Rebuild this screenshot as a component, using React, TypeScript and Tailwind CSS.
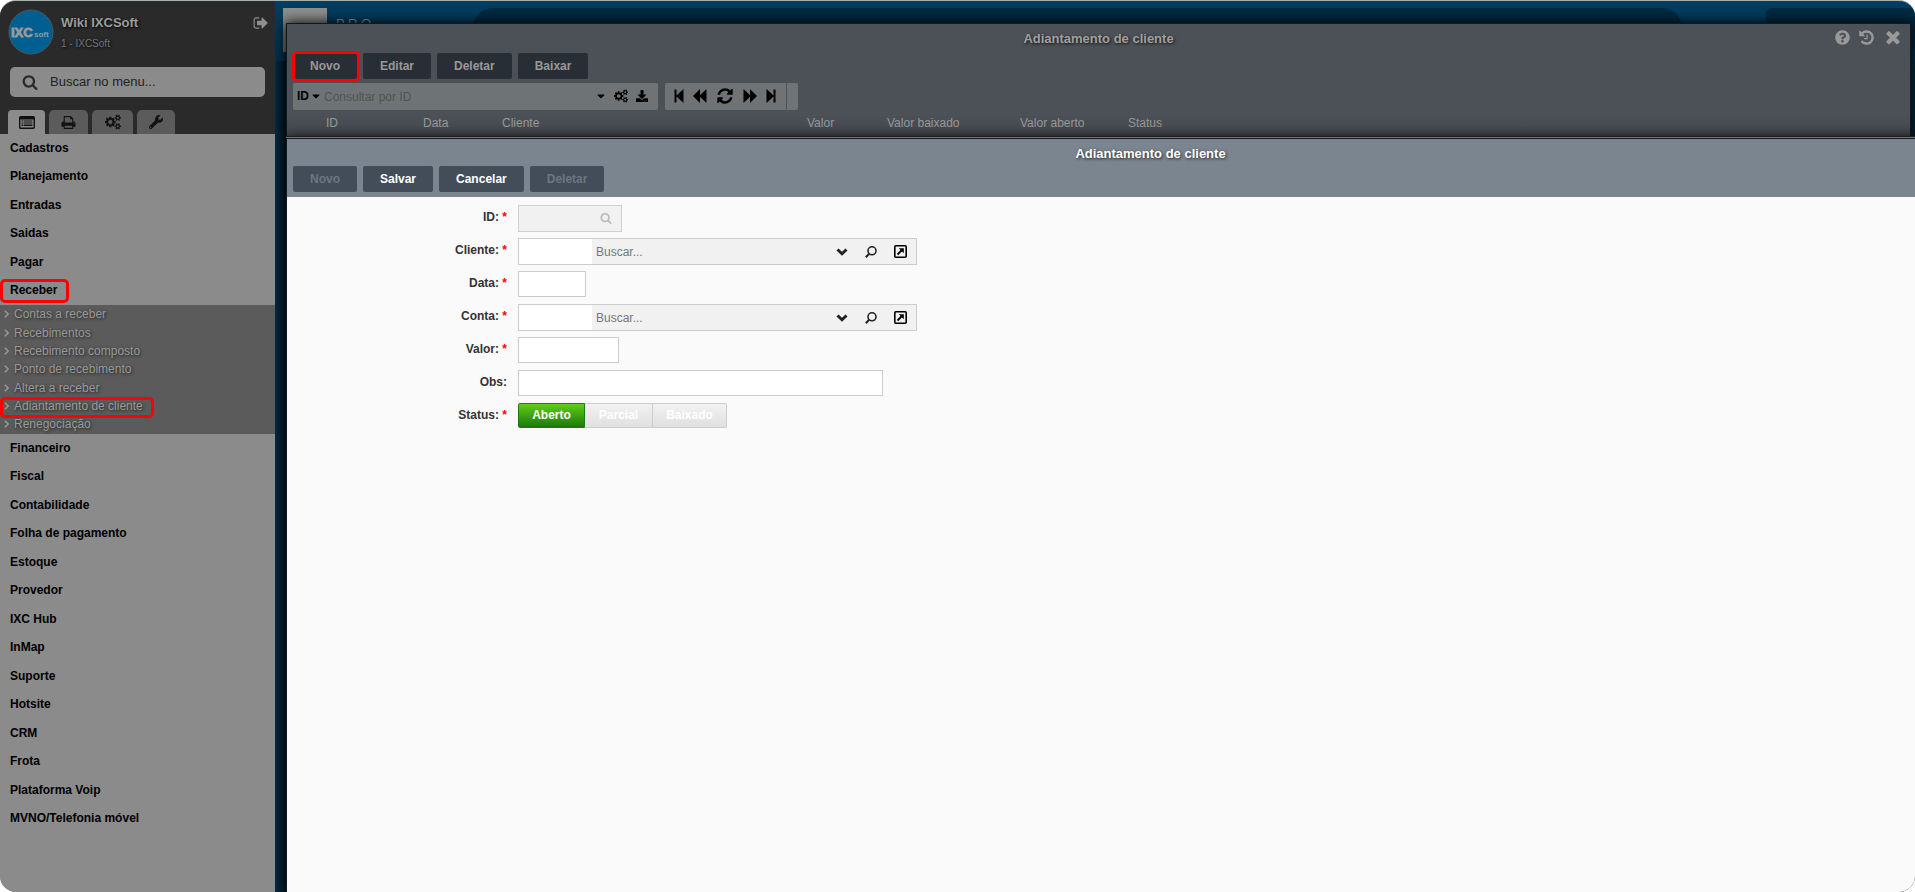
import { Fragment, type ReactNode } from 'react';
import { FaCaretDown, FaDownload, FaQuestionCircle, FaWrench } from 'react-icons/fa';
import { clsx } from 'clsx';

const paths = {
  signOut:
    'M704 1440q0 4 1 20t.5 26.5-3 23.5-10 19.5-20.5 6.5h-320q-119 0-203.5-84.5t-84.5-203.5v-704q0-119 84.5-203.5t203.5-84.5h320q13 0 22.5 9.5t9.5 22.5q0 4 1 20t.5 26.5-3 23.5-10 19.5-20.5 6.5h-320q-66 0-113 47t-47 113v704q0 66 47 113t113 47h312l11.5 1 11.5 3 8 5.5 7 9 2 13.5zm928-544q0 26-19 45l-544 544q-19 19-45 19t-45-19-19-45v-288h-448q-26 0-45-19t-19-45v-384q0-26 19-45t45-19h448v-288q0-26 19-45t45-19 45 19l544 544q19 19 19 45z',
  search:
    'M1216 832q0-185-131.5-316.5t-316.5-131.5-316.5 131.5-131.5 316.5 131.5 316.5 316.5 131.5 316.5-131.5 131.5-316.5zm512 832q0 52-38 90t-90 38q-54 0-90-38l-343-342q-179 124-399 124-143 0-273.5-55.5t-225-150-150-225-55.5-273.5 55.5-273.5 150-225 225-150 273.5-55.5 273.5 55.5 225 150 150 225 55.5 273.5q0 220-124 399l343 343q37 37 37 90z',
  print:
    'M448 1536h896v-256h-896v256zm0-640h896v-384h-160q-40 0-68-28t-28-68v-160h-640v640zm1152 64q0-26-19-45t-45-19-45 19-19 45 19 45 45 19 45-19 19-45zm128 0v416q0 13-9.5 22.5t-22.5 9.5h-224v160q0 40-28 68t-68 28h-960q-40 0-68-28t-28-68v-160h-224q-13 0-22.5-9.5t-9.5-22.5v-416q0-79 56.5-135.5t135.5-56.5h64v-544q0-40 28-68t68-28h672q40 0 88 20t76 48l152 152q28 28 48 76t20 88v256h64q79 0 135.5 56.5t56.5 135.5z',
  cogs:
    'M896 896q0-106-75-181t-181-75-181 75-75 181 75 181 181 75 181-75 75-181zm768 512q0-52-38-90t-90-38-90 38-38 90q0 53 37.5 90.5t90.5 37.5 90.5-37.5 37.5-90.5zm0-1024q0-52-38-90t-90-38-90 38-38 90q0 53 37.5 90.5t90.5 37.5 90.5-37.5 37.5-90.5zm-384 421v185q0 10-7 19.5t-16 10.5l-155 24q-11 35-32 76 34 48 90 115 7 11 7 20 0 12-7 19-23 30-82.5 89.5t-78.5 59.5q-11 0-21-7l-115-90q-37 19-77 31-11 108-23 155-7 24-30 24h-186q-11 0-20-7.5t-10-17.5l-23-153q-34-10-75-31l-118 89q-7 7-20 7-11 0-21-8-144-133-144-160 0-9 7-19 10-14 41-53t47-61q-23-44-35-82l-152-24q-10-1-17-9.5t-7-19.5v-185q0-10 7-19.5t16-10.5l155-24q11-35 32-76-34-48-90-115-7-11-7-20 0-12 7-20 22-30 82-89t79-59q11 0 21 7l115 90q34-18 77-32 11-108 23-154 7-24 30-24h186q11 0 20 7.5t10 17.5l23 153q34 10 75 31l118-89q8-7 20-7 11 0 21 8 144 133 144 160 0 8-7 19-12 16-42 54t-45 60q23 48 34 82l152 23q10 2 17 10.5t7 19.5zm640 533v140q0 16-149 31-12 27-30 52 51 113 51 138 0 4-4 7-122 71-124 71-8 0-46-47t-52-68q-20 2-30 2t-30-2q-14 21-52 68t-46 47q-2 0-124-71-4-3-4-7 0-25 51-138-18-25-30-52-149-15-149-31v-140q0-16 149-31 13-29 30-52-51-113-51-138 0-4 4-7 4-2 35-20t59-34 30-16q8 0 46 46.5t52 67.5q20-2 30-2t30 2q51-71 92-112l6-2q4 0 124 70 4 3 4 7 0 25-51 138 17 23 30 52 149 15 149 31zm0-1024v140q0 16-149 31-12 27-30 52 51 113 51 138 0 4-4 7-122 71-124 71-8 0-46-47t-52-68q-20 2-30 2t-30-2q-14 21-52 68t-46 47q-2 0-124-71-4-3-4-7 0-25 51-138-18-25-30-52-149-15-149-31v-140q0-16 149-31 13-29 30-52-51-113-51-138 0-4 4-7 4-2 35-20t59-34 30-16q8 0 46 46.5t52 67.5q20-2 30-2t30 2q51-71 92-112l6-2q4 0 124 70 4 3 4 7 0 25-51 138 17 23 30 52 149 15 149 31z',
  refresh:
    'M1639 1056q0 5-1 7-64 268-268 434.5t-478 166.5q-146 0-282.5-55t-243.5-157l-129 129q-19 19-45 19t-45-19-19-45v-448q0-26 19-45t45-19h448q26 0 45 19t19 45-19 45l-137 137q71 66 161 102t187 36q134 0 250-65t186-179q11-17 53-117 8-23 30-23h192q13 0 22.5 9.5t9.5 22.5zm25-800v448q0 26-19 45t-45 19h-448q-26 0-45-19t-19-45 19-45l138-138q-148-137-349-137-134 0-250 65t-186 179q-11 17-53 117-8 23-30 23h-199q-13 0-22.5-9.5t-9.5-22.5v-7q65-268 270-434.5t480-166.5q146 0 284 55.5t245 156.5l130-129q19-19 45-19t45 19 19 45z',
  history:
    'M1664 896q0 156-61 298t-164 245-245 164-298 61q-172 0-327-72.5t-264-204.5q-7-10-6.5-22.5t8.5-20.5l137-138q10-9 25-9 16 2 23 12 73 95 179 147t225 52q104 0 198.5-40.5t163.5-109.5 109.5-163.5 40.5-198.5-40.5-198.5-109.5-163.5-163.5-109.5-198.5-40.5q-98 0-188 35.5t-160 101.5l137 138q31 30 14 69-17 40-59 40h-448q-26 0-45-19t-19-45v-448q0-42 40-59 39-17 69 14l130 129q107-101 244.5-156.5t284.5-55.5q156 0 298 61t245 164 164 245 61 298zm-640-288v448q0 14-9 23t-23 9h-320q-14 0-23-9t-9-23v-64q0-14 9-23t23-9h224v-352q0-14 9-23t23-9h64q14 0 23 9t9 23z',
  times:
    'M1490 1322q0 40-28 68l-136 136q-28 28-68 28t-68-28l-294-294-294 294q-28 28-68 28t-68-28l-136-136q-28-28-28-68t28-68l294-294-294-294q-28-28-28-68t28-68l136-136q28-28 68-28t68 28l294 294 294-294q28-28 68-28t68 28l136 136q28 28 28 68t-28 68l-294 294 294 294q28 28 28 68z',
};

function Icon({ name, className }: { name: keyof typeof paths; className?: string }) {
  return (
    <svg viewBox={name === 'cogs' ? '0 0 1920 1792' : '0 0 1792 1792'} fill="currentColor" className={className}>
      <path d={paths[name]} />
    </svg>
  );
}

const menuTop = ['Cadastros', 'Planejamento', 'Entradas', 'Saidas', 'Pagar', 'Receber'];

const submenu = [
  'Contas a receber',
  'Recebimentos',
  'Recebimento composto',
  'Ponto de recebimento',
  'Altera a receber',
  'Adiantamento de cliente',
  'Renegociação',
];

const menuBottom = [
  'Financeiro',
  'Fiscal',
  'Contabilidade',
  'Folha de pagamento',
  'Estoque',
  'Provedor',
  'IXC Hub',
  'InMap',
  'Suporte',
  'Hotsite',
  'CRM',
  'Frota',
  'Plataforma Voip',
  'MVNO/Telefonia móvel',
];

const columns = [
  { label: 'ID', className: 'w-[136px] pl-[39px]' },
  { label: 'Data', className: 'w-[79px]' },
  { label: 'Cliente', className: 'w-[305px]' },
  { label: 'Valor', className: 'w-[80px]' },
  { label: 'Valor baixado', className: 'w-[133px]' },
  { label: 'Valor aberto', className: 'w-[108px]' },
  { label: 'Status', className: '' },
];

function Highlight({ className }: { className: string }) {
  return <span className={clsx('pointer-events-none absolute border-[3px] border-[#ff0000]', className)} />;
}

function Sidebar() {
  return (
    <aside className="w-[275px] shrink-0 bg-[#8b8b8b]">
      <header className="flex h-[133px] flex-col bg-[#2a2a2a]">
        <div className="flex items-start pt-2 pr-[6px] pl-2">
          <svg viewBox="0 0 46 46" className="size-[46px]">
            <circle cx="23" cy="23" r="22" fill="#005f91" stroke="#4a5a63" />
            <text
              x="3"
              y="28"
              fontFamily="Liberation Sans, Arial, sans-serif"
              fontSize="13"
              fontWeight="bold"
              fill="#9a9a9a"
              stroke="#9a9a9a"
              strokeWidth="0.8"
            >
              IXC
            </text>
            <text x="26" y="28" fontFamily="Liberation Sans, Arial, sans-serif" fontSize="8" fontWeight="bold" fill="#9a9a9a">
              soft
            </text>
          </svg>
          <div className="flex-1 pt-[6px] pl-[7px] text-shadow-[1px_1px_3px_#000]">
            <h1 className="text-[13px] leading-4 font-bold text-[#9c9c9c]">Wiki IXCSoft</h1>
            <p className="pt-[7px] text-[10px] leading-3 text-[#757575]">1 - IXCSoft</p>
          </div>
          <button aria-label="Sair" className="pt-[6px] text-[#8f8f8f]">
            <Icon name="signOut" className="size-4" />
          </button>
        </div>
        <label className="mx-[10px] mt-3 flex h-[30px] items-center rounded-[5px] bg-[#8b8b8b] pl-3">
          <Icon name="search" className="size-4 shrink-0 text-[#2a2a2a]" />
          <input
            aria-label="Buscar no menu"
            placeholder="Buscar no menu..."
            className="ml-3 w-full bg-transparent text-[13px] text-[#222] outline-none placeholder:text-[#222]"
          />
        </label>
        <div className="mt-3 flex h-[25px] items-end gap-1 pl-2 text-[#111]">
          <button aria-label="Menu" className="flex h-6 w-[37px] items-center justify-center rounded-t-[4px] bg-[#8b8b8b]">
            <svg viewBox="0 0 16 13" className="h-[13px] w-4">
              <rect x="0.700" y="0.700" width="14.600" height="11.600" rx="1" fill="none" stroke="currentColor" strokeWidth="1.400" />
              <path
                d="M1 1h14v2.500H1zM2.500 4.500h2v1h-2zM5 4.500h8.500v1H5zM2.500 6.500h2v1h-2zM5 6.500h8.500v1H5zM2.500 8.500h2v1.500h-2zM5 8.500h8.500v1.500H5z"
                fill="currentColor"
              />
            </svg>
          </button>
          <button aria-label="Relatórios" className="flex h-6 w-[39px] items-center justify-center rounded-t-[5px] bg-[#5b5b5b]">
            <Icon name="print" className="size-[15px]" />
          </button>
          <button aria-label="Configurações" className="flex h-6 w-[41px] items-center justify-center rounded-t-[5px] bg-[#5b5b5b]">
            <Icon name="cogs" className="size-4" />
          </button>
          <button aria-label="Ferramentas" className="flex h-6 w-[38px] items-center justify-center rounded-t-[5px] bg-[#5b5b5b]">
            <FaWrench className="size-[14px]" />
          </button>
        </div>
      </header>
      <nav className="text-xs">
        <MenuList items={menuTop} />
        <ul className="bg-[#5b5b5b] text-[#999] text-shadow-[1px_1px_3px_#222]">
          {submenu.map((item) => (
            <li key={item} className="relative h-[18px] nth-[3n+1]:h-[19px]">
              <a href="#" className="flex items-center gap-[5px] pl-1 leading-[18px]">
                <svg viewBox="0 0 5 8" className="h-2 w-[5px]" fill="none" stroke="currentColor" strokeWidth="1.500">
                  <path d="M.8.800 4.200 4 .8 7.200" />
                </svg>
                {item}
              </a>
              {item === 'Adiantamento de cliente' && <Highlight className="top-0 left-0 h-[21px] w-[154px] rounded-[5px]" />}
            </li>
          ))}
        </ul>
        <MenuList items={menuBottom} />
      </nav>
    </aside>
  );
}

function MenuList({ items }: { items: string[] }) {
  return (
    <ul className="font-bold text-black">
      {items.map((item) => (
        <li key={item} className="relative h-7 even:h-[29px]">
          <a href="#" className="block pl-[10px] leading-7">
            {item}
          </a>
          {item === 'Receber' && <Highlight className="top-[3px] left-0 h-6 w-[69px] rounded-[5px]" />}
        </li>
      ))}
    </ul>
  );
}

function Desktop() {
  return (
    <div className="absolute inset-0 bg-linear-to-b from-[#003f63] to-[#00283e] to-[80px]">
      <div className="absolute top-[7px] left-2 size-11 bg-linear-to-b from-[#8f8f8f] to-[#6f6f6f]" />
      <div className="absolute top-[15px] left-[61px] text-[13px] leading-4 text-[#8396a1]">P R O —</div>
      <div className="absolute top-[7px] right-[233px] left-[198px] h-11 rounded-[20px] bg-[#001c2e]/60" />
      <div className="absolute top-[7px] right-0 left-[1491px] h-11 rounded-[6px] bg-[#001c2e]/60" />
      <div className="absolute top-[60px] bottom-0 left-0 w-3 bg-linear-to-r from-[#002c44] to-[#001420]" />
    </div>
  );
}

function ListWindow() {
  return (
    <section className="relative mr-1 ml-[11px] border border-b-0 border-[#14181b] bg-linear-to-b from-[#4b5157] from-80% to-[#44474d] text-xs shadow-[0_0_12px_#000]">
      <div className="relative flex h-[29px] justify-center">
        <h2 className="pt-[7px] text-[13px] leading-4 font-bold text-[#a0a0a0] text-shadow-[1px_1px_3px_#111]">
          Adiantamento de cliente
        </h2>
        <div className="absolute top-[3px] right-[7px] flex items-center text-[#999]">
          <button aria-label="Ajuda">
            <FaQuestionCircle className="size-[15px]" />
          </button>
          <button aria-label="Histórico" className="ml-2">
            <Icon name="history" className="size-[17px]" />
          </button>
          <button aria-label="Fechar" className="ml-2">
            <Icon name="times" className="size-5" />
          </button>
        </div>
      </div>
      <div className="flex gap-[6px] pl-[6px] font-bold text-[#999]">
        {['Novo', 'Editar', 'Deletar', 'Baixar'].map((label) => (
          <button key={label} className="relative h-[26px] rounded-[2px] bg-[#282e36] px-[17px]">
            {label}
            {label === 'Novo' && <Highlight className="-top-[2px] -right-[3px] -left-px h-[31px] rounded-[5px]" />}
          </button>
        ))}
      </div>
      <div className="flex gap-[7px] pt-1 pl-[6px] text-black">
        <div className="flex h-[27px] w-[365px] items-center rounded-[2px] bg-[#6f7375] pb-[2px] pl-1">
          <button className="flex items-center gap-px font-bold">
            ID <FaCaretDown className="size-3" />
          </button>
          <input
            aria-label="Consultar por ID"
            placeholder="Consultar por ID"
            className="min-w-0 flex-1 bg-transparent pt-[2px] pl-[2px] outline-none placeholder:text-[#505356]"
          />
          <button aria-label="Opções">
            <FaCaretDown className="size-3" />
          </button>
          <button aria-label="Filtros" className="ml-[7px]">
            <Icon name="cogs" className="size-[14px]" />
          </button>
          <button aria-label="Exportar" className="mr-[10px] ml-2">
            <FaDownload className="size-3" />
          </button>
        </div>
        <div className="flex gap-px">
          <div className="flex h-[27px] w-[121px] items-center justify-between rounded-l-[2px] bg-[#6f7375] pr-[10px] pb-[2px] pl-[9px]">
            <button aria-label="Primeira página">
              <svg viewBox="0 0 10 14" className="h-[14px] w-[10px]">
                <path d="M.5.500h2v6L9.500 0v14L2.500 7.500v6h-2z" />
              </svg>
            </button>
            <button aria-label="Página anterior">
              <svg viewBox="0 0 14 14" className="size-[14px]">
                <path d="M7 0v6.300L13.500 0v14L7 7.700V14L0 7z" />
              </svg>
            </button>
            <button aria-label="Atualizar">
              <Icon name="refresh" className="size-[18px]" />
            </button>
            <button aria-label="Próxima página">
              <svg viewBox="0 0 14 14" className="size-[14px]">
                <path d="M7 0v6.300L.5 0v14L7 7.700V14l7-7z" />
              </svg>
            </button>
            <button aria-label="Última página">
              <svg viewBox="0 0 10 14" className="h-[14px] w-[10px]">
                <path d="M9.500.500h-2v6L.5 0v14l7-6.500v6h2z" />
              </svg>
            </button>
          </div>
          <div className="w-[11px] rounded-r-[2px] bg-[#6f7375]" />
        </div>
      </div>
      <table className="h-7 w-full table-fixed text-left text-[#999]">
        <thead>
          <tr>
            {columns.map(({ label, className }) => (
              <th key={label} className={clsx('pb-[2px] font-normal', className)}>
                {label}
              </th>
            ))}
          </tr>
        </thead>
      </table>
    </section>
  );
}

function LookupField({ id }: { id: string }) {
  return (
    <div className="flex h-[27px] w-[399px] items-center border border-[#ccc] bg-[#f1f1f1] text-[#222]">
      <input id={id} className="h-full w-[73px] bg-white outline-none" />
      <input
        aria-label={`Buscar ${id}`}
        placeholder="Buscar..."
        className="min-w-0 flex-1 bg-transparent pl-1 outline-none placeholder:text-[#777]"
      />
      <button aria-label="Abrir lista">
        <svg viewBox="0 0 12 12" className="size-3" fill="none" stroke="currentColor" strokeWidth="3">
          <path d="M1.500 3.500 6 7.800l4.500-4.300" />
        </svg>
      </button>
      <button aria-label="Pesquisar" className="ml-[17px]">
        <svg viewBox="0 0 12 12" className="size-3" fill="none" stroke="currentColor">
          <circle cx="7" cy="4.800" r="4" strokeWidth="1.600" />
          <path d="M4.200 7.800.8 11.200" strokeWidth="2" />
        </svg>
      </button>
      <button aria-label="Abrir cadastro" className="mr-[9px] ml-[17px] text-black">
        <svg viewBox="0 0 13 13" className="size-[13px]" fill="none" stroke="currentColor">
          <rect x="0.800" y="0.800" width="11.400" height="11.400" rx="1" strokeWidth="1.600" />
          <path d="M3.500 9.500 8 5" strokeWidth="1.800" />
          <path d="M4.800 3.300h5v5z" fill="currentColor" stroke="none" />
        </svg>
      </button>
    </div>
  );
}

const inputClass = 'h-[26px] border border-[#ccc] bg-white px-1 outline-none';

const fields: { id: string; label: string; required: boolean; control: ReactNode }[] = [
  {
    id: 'id',
    label: 'ID:',
    required: true,
    control: (
      <div className="flex h-[27px] w-[104px] items-center border border-[#d0d0d0] bg-[#f1f1f1]">
        <input id="id" disabled className="h-full w-[73px]" />
        <button aria-label="Pesquisar ID" disabled className="ml-2 pb-[2px] text-[#bbb]">
          <Icon name="search" className="size-3" />
        </button>
      </div>
    ),
  },
  { id: 'cliente', label: 'Cliente:', required: true, control: <LookupField id="cliente" /> },
  { id: 'data', label: 'Data:', required: true, control: <input id="data" className={clsx(inputClass, 'w-[68px]')} /> },
  { id: 'conta', label: 'Conta:', required: true, control: <LookupField id="conta" /> },
  { id: 'valor', label: 'Valor:', required: true, control: <input id="valor" className={clsx(inputClass, 'w-[101px]')} /> },
  { id: 'obs', label: 'Obs:', required: false, control: <input id="obs" className={clsx(inputClass, 'w-[365px]')} /> },
  {
    id: 'status',
    label: 'Status:',
    required: true,
    control: (
      <div className="flex h-[25px] font-bold text-white">
        <button
          id="status"
          type="button"
          className="w-[67px] rounded-l-[2px] border border-[#1d7a10] bg-linear-to-b from-[#5fcf1c] to-[#1a7a08] pb-[2px]"
        >
          Aberto
        </button>
        <button type="button" className="w-[68px] border-y border-r border-[#ccc] bg-linear-to-b from-[#f2f2f2] to-[#e0e0e0] pb-[2px]">
          Parcial
        </button>
        <button
          type="button"
          className="w-[74px] rounded-r-[2px] border-y border-r border-[#ccc] bg-linear-to-b from-[#f2f2f2] to-[#e0e0e0] pb-[2px]"
        >
          Baixado
        </button>
      </div>
    ),
  },
];

function FormWindow() {
  return (
    <section className="relative ml-[11px] flex w-[calc(100%+88px)] flex-1 flex-col border border-r-0 border-b-0 border-[#14181b] bg-[#fafafa] text-xs shadow-[0_-1px_0_#77797c,0_-2px_0_#1b1d20,0_0_12px_#000]">
      <header className="h-[58px] bg-[#7b858f]">
        <h2 className="h-[27px] pt-[7px] text-center text-[13px] leading-4 font-bold text-white text-shadow-[1px_1px_3px_#222]">
          Adiantamento de cliente
        </h2>
        <div className="flex gap-[6px] pl-[6px] font-bold text-white">
          {['Novo', 'Salvar', 'Cancelar', 'Deletar'].map((label) => (
            <button
              key={label}
              disabled={label === 'Novo' || label === 'Deletar'}
              className="h-[26px] rounded-[2px] bg-[#434d59] px-[17px] disabled:text-[#6c7680]"
            >
              {label}
            </button>
          ))}
        </div>
      </header>
      <form className="grid grid-cols-[220px_1fr] gap-x-[11px] pt-2">
        {fields.map(({ id, label, required, control }) => (
          <Fragment key={id}>
            <label htmlFor={id} className="text-right leading-6 font-bold text-[#333]">
              {label} {required && <span className="text-[#ff0000]">*</span>}
            </label>
            <div className="h-[33px]">{control}</div>
          </Fragment>
        ))}
      </form>
    </section>
  );
}

export default function App() {
  return (
    <div className="flex h-screen overflow-hidden rounded-2xl border-t border-[#a8b0b0] bg-[#8b8b8b] font-['Liberation_Sans',Arial,sans-serif]">
      <Sidebar />
      <main className="relative flex min-w-0 flex-1 flex-col overflow-hidden pt-[22px]">
        <Desktop />
        <ListWindow />
        <FormWindow />
      </main>
    </div>
  );
}
